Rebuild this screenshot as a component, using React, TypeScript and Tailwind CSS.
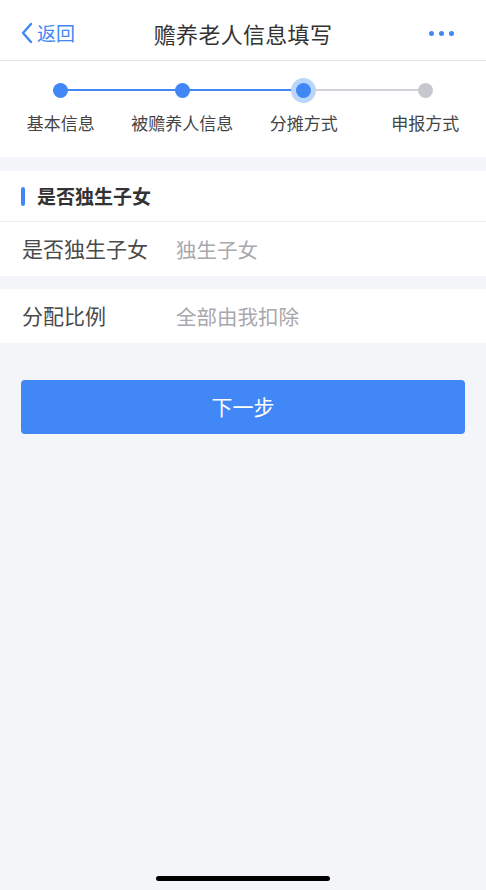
import React from 'react';

const steps = [
  { label: '基本信息', state: 'done' },
  { label: '被赡养人信息', state: 'done' },
  { label: '分摊方式', state: 'active' },
  { label: '申报方式', state: 'todo' },
];

const App: React.FC = () => {
  return (
    <div
      className="min-h-[890px] w-[486px] bg-[#f4f5f9] flex flex-col"
      style={{ fontFamily: '"Noto Sans CJK SC", "Noto Sans", sans-serif' }}
    >
      {/* Nav bar */}
      <header className="h-[61px] pt-[6px] bg-white border-b border-[#e3e3e6] flex items-center justify-between px-[20px] relative">
        <div className="flex items-center text-[#4187f5] text-[19px] gap-[3px]">
          <svg width="14" height="22" viewBox="0 0 14 22" fill="none">
            <path d="M11 2L3 11l8 9" stroke="#4187f5" strokeWidth="2.4" strokeLinecap="round" strokeLinejoin="round" />
          </svg>
          <span>返回</span>
        </div>
        <h1 className="absolute left-1/2 top-[6px] bottom-0 flex items-center -translate-x-1/2 text-[22px] text-[#333] tracking-[0.3px]">赡养老人信息填写</h1>
        <div className="flex items-center gap-[5px] pr-[12px]">
          <span className="w-[5px] h-[5px] rounded-full bg-[#4187f5]" />
          <span className="w-[5px] h-[5px] rounded-full bg-[#4187f5]" />
          <span className="w-[5px] h-[5px] rounded-full bg-[#4187f5]" />
        </div>
      </header>

      {/* Stepper */}
      <section className="h-[96px] bg-white grid grid-cols-4">
        {steps.map((s, i) => (
          <div key={s.label} className="flex flex-col items-center">
            <div className="relative w-full h-[58px] flex items-center justify-center">
              {i > 0 && (
                <div
                  className={`absolute left-0 right-1/2 top-[28px] h-[1.5px] ${
                    s.state === 'todo' ? 'bg-[#d3d4da]' : 'bg-[#4187f5]'
                  }`}
                />
              )}
              {i < steps.length - 1 && (
                <div
                  className={`absolute left-1/2 right-0 top-[28px] h-[1.5px] ${
                    steps[i + 1].state === 'todo' ? 'bg-[#d3d4da]' : 'bg-[#4187f5]'
                  }`}
                />
              )}
              {s.state === 'active' ? (
                <div className="relative w-[25px] h-[25px] rounded-full bg-[#bcd6fb] flex items-center justify-center">
                  <div className="w-[15px] h-[15px] rounded-full bg-[#4187f5]" />
                </div>
              ) : (
                <div
                  className={`relative w-[15px] h-[15px] rounded-full ${
                    s.state === 'todo' ? 'bg-[#c6c7cf]' : 'bg-[#4187f5]'
                  }`}
                />
              )}
            </div>
            <span className="text-[17px] text-[#444] leading-[20px] -mt-[6px]">{s.label}</span>
          </div>
        ))}
      </section>

      {/* Section */}
      <section className="mt-[14px] bg-white">
        <div className="h-[51px] flex items-center px-[21px] border-b border-[#ededf0]">
          <span className="w-[4px] h-[19px] rounded-full bg-[#4187f5] mr-[12px]" />
          <span className="text-[19px] font-bold text-[#333]">是否独生子女</span>
        </div>
        <div className="h-[54px] flex items-center px-[22px]">
          <span className="w-[154px] text-[21px] text-[#4a4a4a]">是否独生子女</span>
          <span className="text-[20.5px] text-[#a8a8ad]">独生子女</span>
        </div>
      </section>

      <section className="mt-[13px] bg-white">
        <div className="h-[54px] flex items-center px-[22px]">
          <span className="w-[154px] text-[21px] text-[#4a4a4a]">分配比例</span>
          <span className="text-[20.5px] text-[#a8a8ad]">全部由我扣除</span>
        </div>
      </section>

      <div className="px-[21px] mt-[37px]">
        <button className="w-full h-[54px] rounded-[4px] bg-[#4187f5] text-white text-[21px]">下一步</button>
      </div>

      <div className="flex-1" />
      <div className="flex justify-center pb-[9px]">
        <div className="w-[174px] h-[5px] rounded-full bg-black" />
      </div>
    </div>
  );
};

export default App;
